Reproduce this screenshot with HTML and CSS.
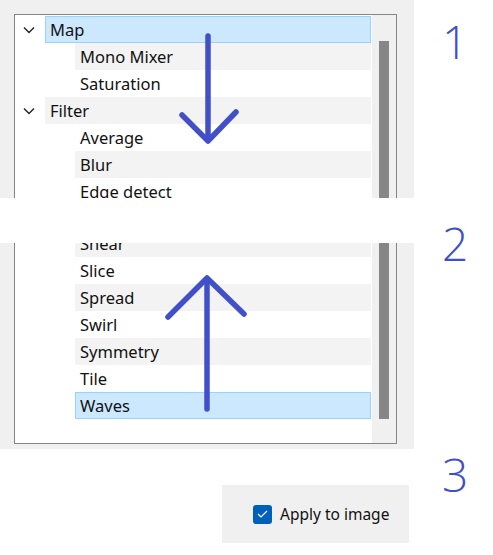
FILE: index.html
```html
<!DOCTYPE html>
<html lang="en">
<head>
  <meta charset="UTF-8">
  <title>Tree scroll</title>
  <link rel="stylesheet" href="styles.css">
</head>
<body>
  <div class="page">
    <div class="panels">
      <div class="panel panel-top">
        <div class="box box-top">
          <ul class="tree">
            <li class="row parent selected"><span class="chev"><svg width="12" height="8" viewBox="0 0 12 8"><polyline points="1,1.5 6,6.5 11,1.5" fill="none" stroke="#222" stroke-width="1.4"/></svg></span><span class="label">Map</span></li>
            <li class="row child alt"><span class="label">Mono Mixer</span></li>
            <li class="row child"><span class="label">Saturation</span></li>
            <li class="row parent alt"><span class="chev"><svg width="12" height="8" viewBox="0 0 12 8"><polyline points="1,1.5 6,6.5 11,1.5" fill="none" stroke="#222" stroke-width="1.4"/></svg></span><span class="label">Filter</span></li>
            <li class="row child"><span class="label">Average</span></li>
            <li class="row child alt"><span class="label">Blur</span></li>
            <li class="row child"><span class="label">Edge detect</span></li>
          </ul>
          <div class="scroll"><div class="thumb thumb-top"></div></div>
        </div>
        <svg class="arrow" width="414" height="198" viewBox="0 0 414 198">
          <g fill="none" stroke="#4150c9" stroke-width="5.5" stroke-linecap="round" stroke-linejoin="round">
            <line x1="208" y1="36" x2="208" y2="140"/>
            <polyline points="182,115 208,141 236,112"/>
          </g>
        </svg>
      </div>

      <div class="panel panel-bottom">
        <div class="box box-bottom">
          <ul class="tree scrolled">
            <li class="row child alt"><span class="label">Shear</span></li>
            <li class="row child"><span class="label">Slice</span></li>
            <li class="row child alt"><span class="label">Spread</span></li>
            <li class="row child"><span class="label">Swirl</span></li>
            <li class="row child alt"><span class="label">Symmetry</span></li>
            <li class="row child"><span class="label">Tile</span></li>
            <li class="row child selected"><span class="label">Waves</span></li>
          </ul>
          <div class="scroll"><div class="thumb thumb-bottom"></div></div>
        </div>
        <svg class="arrow" width="414" height="206" viewBox="0 0 414 206">
          <g fill="none" stroke="#4150c9" stroke-width="5.5" stroke-linecap="round" stroke-linejoin="round">
            <line x1="207" y1="36" x2="207" y2="166"/>
            <polyline points="168,74 207,35 244,71"/>
          </g>
        </svg>
      </div>

      <div class="panel-apply">
        <label class="check">
          <span class="box-check"><svg width="11" height="8" viewBox="0 0 11 8"><polyline points="1,4 4,7 10,1" fill="none" stroke="#fff" stroke-width="1.2"/></svg></span>
          Apply to image
        </label>
      </div>
    </div>

    <div class="numbers">
      <div class="num num-1">1</div>
      <div class="num num-2">2</div>
      <div class="num num-3">3</div>
    </div>
  </div>
</body>
</html>
```

FILE: styles.css
```css
body {
  margin: 0;
  background: #fff;
  font-family: "Noto Sans", "Open Sans", sans-serif;
  color: #111;
}
.page {
  display: flex;
  width: 493px;
  height: 555px;
}
.panels {
  width: 414px;
}
.panel {
  position: relative;
  background: #f0f0f0;
  padding-left: 14px;
  padding-right: 17px;
  overflow: hidden;
}
.panel-top {
  height: 198px;
  padding-top: 14px;
  box-sizing: border-box;
}
.panel-bottom {
  height: 206px;
  margin-top: 45px;
  box-sizing: border-box;
}
.box {
  display: flex;
  background: #fff;
  border: 1px solid #858585;
}
.box-top {
  border-bottom: none;
  height: 184px;
}
.box-bottom {
  border-top: none;
  height: 200px;
}
.tree {
  list-style: none;
  margin: 0;
  padding: 1px 0 0 0;
  flex: 1;
  overflow: hidden;
}
.tree.scrolled {
  padding-top: 0;
}
.tree.scrolled .row:first-child {
  margin-top: -13px;
}
.row {
  display: flex;
  align-items: center;
  height: 27px;
  box-sizing: border-box;
  margin-right: 1px;
  font-size: 16.5px;
}
.row.parent {
  padding-left: 8px;
}
.row.child {
  margin-left: 60px;
}
.row .label {
  padding-left: 5px;
}
.row.parent .label {
  flex: 1;
  align-self: stretch;
  display: flex;
  align-items: center;
}
.row.child {
  padding-left: 0;
}
.row.alt .label,
.row.child.alt {
  background: #f3f3f3;
}
.row.parent.alt {
  background: none;
}
.row.parent.alt .label {
  background: #f3f3f3;
}
.chev {
  width: 22px;
  display: flex;
  align-items: center;
  padding-top: 1px;
}
.row.selected .label,
.row.child.selected {
  background: #cce8ff;
  box-shadow: inset 0 0 0 1px #99d1ff;
}
.row.child.selected .label {
  background: none;
  box-shadow: none;
}
.row.parent.selected {
  background: none;
  box-shadow: none;
}
.scroll {
  width: 24px;
  background: #f0f0f0;
  display: flex;
  justify-content: center;
}
.thumb {
  width: 10px;
  background: #868686;
}
.thumb-top {
  margin-top: 26px;
  height: 200px;
}
.thumb-bottom {
  height: 176px;
}
.arrow {
  position: absolute;
  left: 0;
  top: 0;
}
.panel-apply {
  margin: 36px 0 0 222px;
  width: 187px;
  height: 58px;
  background: #f0f0f0;
  display: flex;
  align-items: center;
}
.check {
  display: flex;
  align-items: center;
  margin-left: 31px;
  font-size: 15.5px;
  gap: 8px;
}
.box-check {
  width: 19px;
  height: 19px;
  border-radius: 3px;
  background: #005fb8;
  display: flex;
  align-items: center;
  justify-content: center;
}
.numbers {
  flex: 1;
  color: #3f4fc8;
  font-family: "Open Sans", sans-serif;
  font-weight: 300;
  font-size: 46px;
  line-height: 46px;
  padding-left: 28px;
}
.num-1 {
  margin-top: 18px;
}
.num-2 {
  margin-top: 156px;
}
.num-3 {
  margin-top: 185px;
}
```
